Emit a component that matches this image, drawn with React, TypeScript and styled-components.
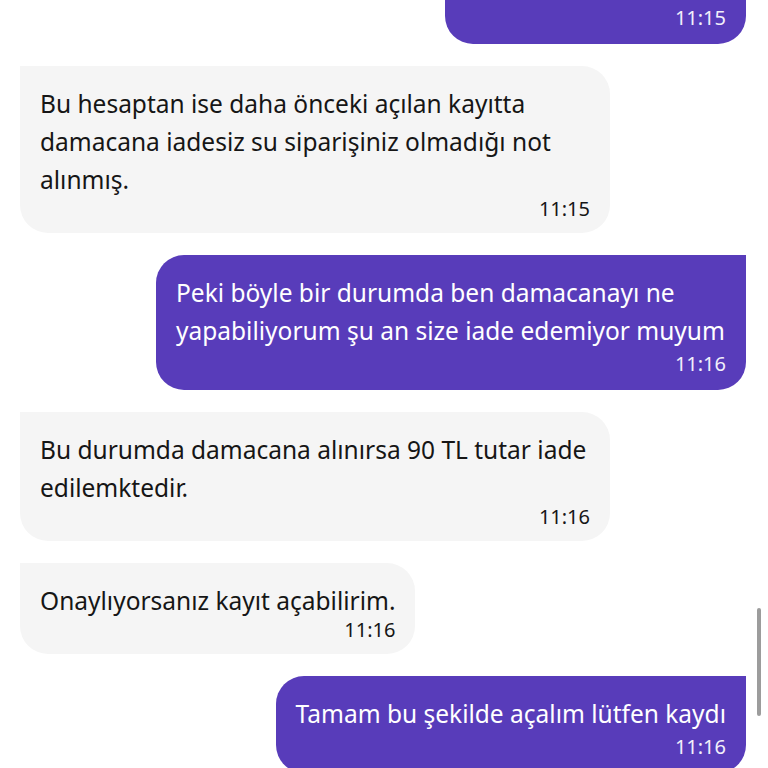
import * as React from 'react';
import styled, { createGlobalStyle, css } from 'styled-components';

type Side = 'me' | 'them';

interface Message {
    id: number;
    side: Side;
    text: string;
    time: string;
}

const messages: Message[] = [
    { id: 1, side: 'me', text: 'yoğurt gibi yapıyor mu', time: '11:15' },
    { id: 2, side: 'them', text: 'Bu hesaptan ise daha önceki açılan kayıtta damacana iadesiz su siparişiniz olmadığı not alınmış.', time: '11:15' },
    { id: 3, side: 'me', text: 'Peki böyle bir durumda ben damacanayı ne yapabiliyorum şu an size iade edemiyor muyum', time: '11:16' },
    { id: 4, side: 'them', text: 'Bu durumda damacana alınırsa 90 TL tutar iade edilemktedir.', time: '11:16' },
    { id: 5, side: 'them', text: 'Onaylıyorsanız kayıt açabilirim.', time: '11:16' },
    { id: 6, side: 'me', text: 'Tamam bu şekilde açalım lütfen kaydı', time: '11:16' },
];

export default class App extends React.Component {
    render() {
        return (
            <>
                <GlobalStyle />
                <Screen>
                    <Thread>
                        {messages.map((m) => (
                            <Row key={m.id} side={m.side}>
                                <Bubble side={m.side}>
                                    <Text>{m.text}</Text>
                                    <Time side={m.side}>{m.time}</Time>
                                </Bubble>
                            </Row>
                        ))}
                    </Thread>
                    <Scrollbar />
                </Screen>
            </>
        );
    }
}

const GlobalStyle = createGlobalStyle`
    html, body {
        margin: 0;
        padding: 0;
        background: #ffffff;
        overflow: hidden;
    }
    body {
        font-family: "Noto Sans", "Open Sans", sans-serif;
    }
`;

const Screen = styled.div`
    position: relative;
    width: 768px;
    height: 768px;
    overflow: hidden;
    background: #ffffff;
`;

const Thread = styled.div`
    display: flex;
    flex-direction: column;
    gap: 22px;
    padding: 0 22px 0 20px;
    margin-top: -53px;
`;

const Row = styled.div<{ side: Side }>`
    display: flex;
    justify-content: ${(p) => (p.side === 'me' ? 'flex-end' : 'flex-start')};
`;

const Bubble = styled.div<{ side: Side }>`
    max-width: 550px;
    padding: 19px 20px 14px 20px;
    border-radius: 28px;

    ${(p) =>
        p.side === 'me'
            ? css`
                  background: #583cba;
                  color: #ffffff;
                  border-top-right-radius: 0;
                  padding-top: 19px;
                  padding-bottom: 16px;
              `
            : css`
                  background: #f5f5f5;
                  color: #161616;
                  border-top-left-radius: 0;
              `}
`;

const Text = styled.div`
    font-size: 24.5px;
    line-height: 38px;
`;

const Time = styled.div<{ side: Side }>`
    font-size: 20px;
    line-height: 20px;
    text-align: right;
    margin-top: ${(p) => (p.side === 'me' ? '4px' : '0')};
    color: ${(p) => (p.side === 'me' ? '#f2f0fb' : '#161616')};
`;

const Scrollbar = styled.div`
    position: absolute;
    top: 608px;
    right: 7px;
    width: 4px;
    height: 108px;
    border-radius: 2px;
    background: #9c9c9c;
`;
